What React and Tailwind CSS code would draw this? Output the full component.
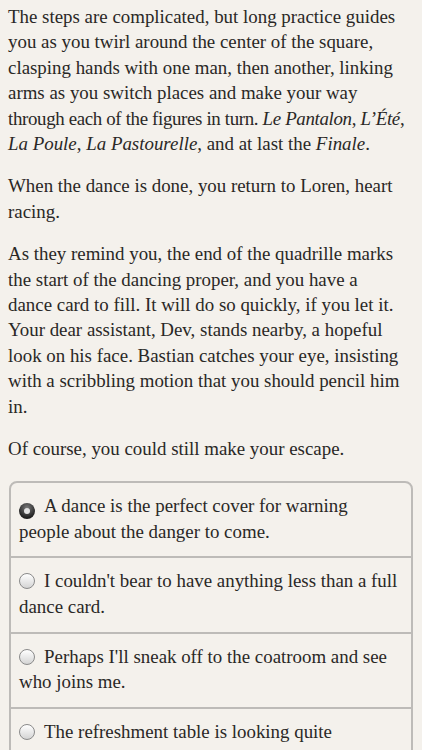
import React, { useState } from 'react';

const choices = [
  ['A dance is the perfect cover for warning', 'people about the danger to come.'],
  ["I couldn't bear to have anything less than a full", 'dance card.'],
  ["Perhaps I'll sneak off to the coatroom and see", 'who joins me.'],
  ['The refreshment table is looking quite', 'tempting right about now.'],
];

const Radio = ({ checked }) =>
  checked ? (
    <span className="inline-flex items-center justify-center w-[16px] h-[16px] rounded-full bg-[radial-gradient(circle_at_50%_30%,#7a7a7a,#1c1c1c_75%)] align-[-2px] mr-[9px]">
      <span className="w-[6px] h-[6px] rounded-full bg-[#e2e2e2]" />
    </span>
  ) : (
    <span className="inline-block w-[16px] h-[16px] rounded-full border border-[#8a8a8a] bg-[linear-gradient(180deg,#ffffff,#d4d4d4)] align-[-2px] mr-[9px]" />
  );

export default function App() {
  const [selected, setSelected] = useState(0);

  return (
    <div className="min-h-screen bg-[#f4f1ec] text-[#2a2826] px-2 pt-[4px] text-[18.9px] leading-[25.4px] whitespace-nowrap"
      style={{ fontFamily: '"Liberation Serif", serif' }}>
      <p>
        The steps are complicated, but long practice guides<br />
        you as you twirl around the center of the square,<br />
        clasping hands with one man, then another, linking<br />
        arms as you switch places and make your way<br />
        <span className="tracking-[-0.35px]">
          through each of the figures in turn. <i>Le Pantalon</i>, <i>L’Été</i>,
        </span><br />
        <i>La Poule</i>, <i>La Pastourelle</i>, and at last the <i>Finale</i>.
      </p>
      <p className="mt-[17px]">
        When the dance is done, you return to Loren, heart<br />
        racing.
      </p>
      <p className="mt-[17px]">
        As they remind you, the end of the quadrille marks<br />
        the start of the dancing proper, and you have a<br />
        dance card to fill. It will do so quickly, if you let it.<br />
        Your dear assistant, Dev, stands nearby, a hopeful<br />
        look on his face. Bastian catches your eye, insisting<br />
        with a scribbling motion that you should pencil him<br />
        in.
      </p>
      <p className="mt-[17px]">Of course, you could still make your escape.</p>

      <div className="mt-[19px] ml-px mr-px border-2 border-[#bdbbb8] rounded-lg overflow-hidden">
        {choices.map((lines, i) => (
          <div key={i} onClick={() => setSelected(i)}
            className={`px-2 pt-[10px] pb-[12.5px] cursor-pointer ${i > 0 ? 'border-t-2 border-[#bdbbb8]' : ''}`}>
            <Radio checked={selected === i} />
            {lines[0]}<br />
            {lines[1]}
          </div>
        ))}
      </div>
    </div>
  );
}
